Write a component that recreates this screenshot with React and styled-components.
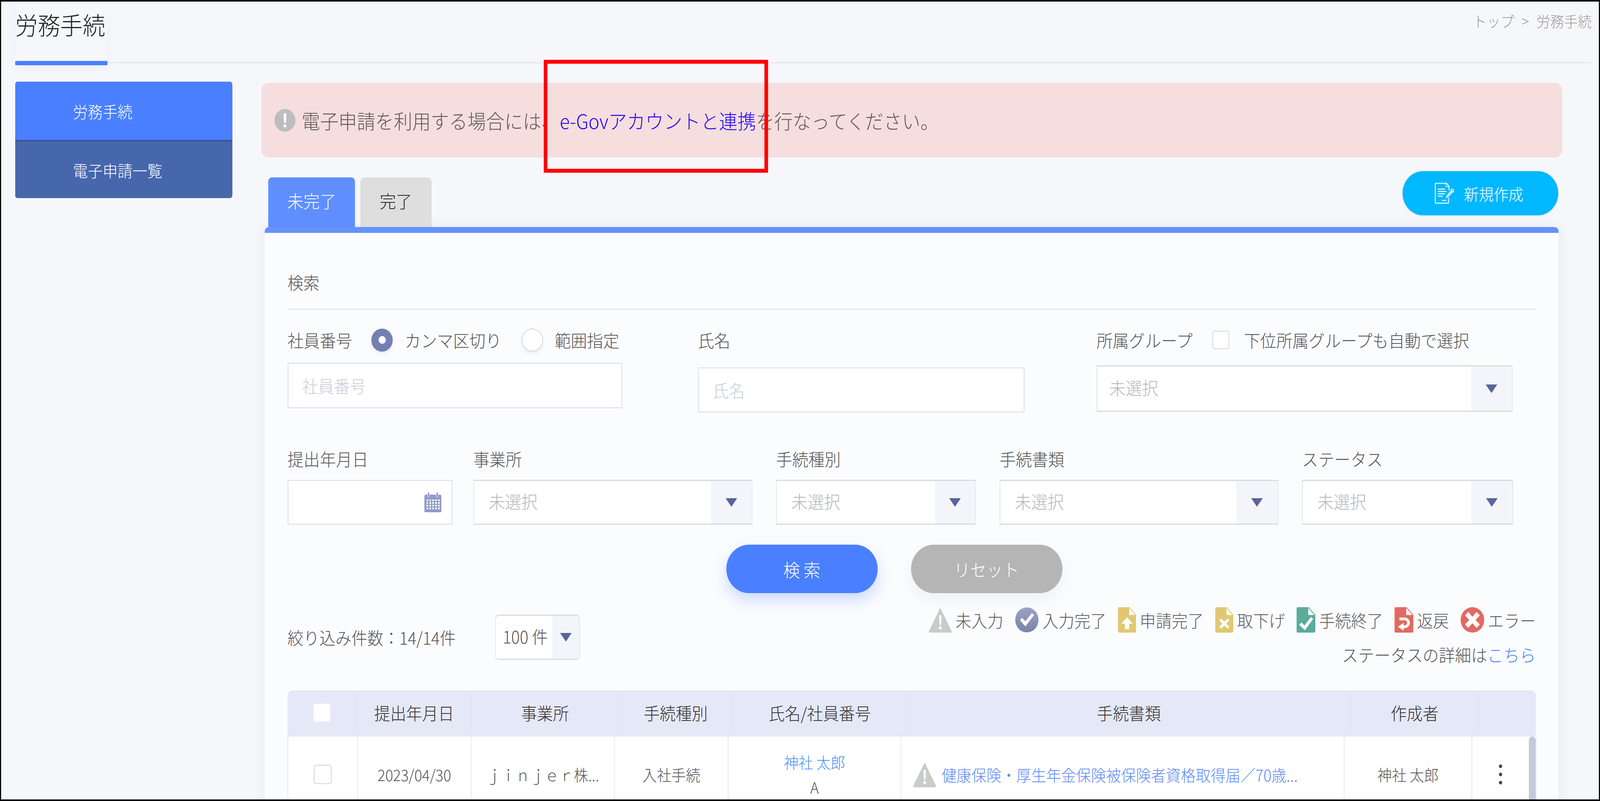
import React, { useState } from "react";
import styled, { createGlobalStyle } from "styled-components";

/* The layout is authored for a 4408px wide window. The sandbox browser reports
   innerWidth 4096, so the page is fitted to whatever width the window really has;
   at a true 4408px window the factor is exactly 1. */
const DESIGN_WIDTH = 4408;

const Global = createGlobalStyle`
  html, body { margin: 0; padding: 0; background: #f6f7fb; overflow: hidden; }
  * { box-sizing: border-box; }
  body { font-family: "Noto Sans CJK JP", "Noto Sans", sans-serif; font-weight: 300; }
`;

const Frame = styled.div`
  position: relative;
  width: ${DESIGN_WIDTH}px;
  height: 2050px;
  overflow: hidden;
  background: #f6f7fb;
  border: solid #000;
  border-width: 4px 3px;
  color: #555;
  transform-origin: 0 0;
`;

const Header = styled.header`
  height: 158px;
  margin: 0 22px 0 39px;
  display: flex;
  justify-content: space-between;
  align-items: flex-start;
  border-bottom: 3px solid #e3e6f3;
`;

const Title = styled.h1`
  width: 254px;
  height: 163px;
  margin: 0;
  padding-top: 18px;
  border-bottom: 11px solid #4a80ff;
  box-shadow: 0 14px 22px rgba(74, 128, 255, 0.05);
  font-size: 62px;
  line-height: 80px;
  font-weight: 300;
  color: #222;
  white-space: nowrap;
`;

const Crumb = styled.div`
  padding-top: 22px;
  margin-right: -2px;
  font-size: 38px;
  line-height: 54px;
  word-spacing: 12px;
  color: #a09c9c;
`;

const Body = styled.div`
  display: flex;
  align-items: flex-start;
  padding-left: 39px;
`;

const Side = styled.nav`
  width: 598px;
  margin-top: 47px;
  border-radius: 7px;
  overflow: hidden;
  background: #4767ad;
`;

const SideItem = styled.div`
  height: 149px;
  display: flex;
  align-items: center;
  padding-left: 159px;
  font-size: 41px;
  color: #fff;
  background: ${(p) => (p.$active ? "#4a80ff" : "#4767ad")};
  border-top: ${(p) => (p.$active ? "0" : "4px solid #3b5792")};
`;

const Main = styled.main`
  width: 3584px;
  margin: 50px 0 0 80px;
`;

const Alert = styled.div`
  height: 191px;
  display: flex;
  align-items: center;
  gap: 17px;
  padding-left: 36px;
  background: #f5dedd;
  border-radius: 20px;
  font-size: 50.8px;
  color: #5f5a5a;
  white-space: nowrap;
`;

const AlertLink = styled.a`
  color: #2200ff;
`;

const TabRow = styled.div`
  position: relative;
  z-index: 1;
  height: 143px;
  margin-top: 35px;
  padding: 0 11px 0 19px;
  display: flex;
  justify-content: space-between;
  align-items: flex-end;
`;

const Tabs = styled.div`
  display: flex;
  gap: 15px;
`;

const Tab = styled.div`
  width: ${(p) => p.$w}px;
  height: 127px;
  padding-bottom: 8px;
  display: flex;
  align-items: center;
  justify-content: center;
  border-radius: 10px 10px 0 0;
  font-size: 45px;
  background: ${(p) => (p.$active ? "#5f8fff" : "#dedede")};
  color: ${(p) => (p.$active ? "#fff" : "#222")};
`;

const NewButton = styled.button`
  align-self: flex-start;
  width: 429px;
  height: 113px;
  display: flex;
  align-items: center;
  gap: 26px;
  padding: 0 0 0 89px;
  border: 0;
  border-radius: 57px;
  background: #00b8ff;
  color: #fff;
  font: inherit;
  font-size: 41px;
  box-shadow: 0 1px 4px rgba(120, 110, 100, 0.25);
`;

const Panel = styled.section`
  height: 1500px;
  margin: 0 10px 0 9px;
  padding: 0 63px;
  background: #fbfcfe;
  border-top: 15px solid #6593fb;
  border-radius: 12px 12px 0 0;
  box-shadow: 0 0 30px rgba(80, 90, 160, 0.09);
`;

const SearchHead = styled.div`
  height: 197px;
  padding-top: 96px;
  border-bottom: 3px solid #e4e7f4;
  font-size: 44px;
  line-height: 60px;
  color: #555;
`;

const FormRow = styled.div`
  display: flex;
  align-items: flex-start;
  margin-top: ${(p) => p.$top}px;
`;

const Field = styled.div`
  width: ${(p) => p.$w}px;
  margin-left: ${(p) => p.$ml || 0}px;
`;

const LabelRow = styled.div`
  height: 60px;
  display: flex;
  align-items: center;
  font-size: 44.5px;
  line-height: 60px;
  color: #555;
  white-space: nowrap;
`;

const Radio = styled.span`
  width: 59px;
  height: 59px;
  margin: 0 ${(p) => p.$mr}px 0 ${(p) => p.$ml}px;
  border-radius: 50%;
  flex: none;
  background: ${(p) => (p.$on ? "#7480b2" : "#fff")};
  border: ${(p) => (p.$on ? "0" : "2px solid #d6d6d6")};
  box-shadow: 0 6px 10px rgba(120, 120, 120, 0.1);
  display: flex;
  align-items: center;
  justify-content: center;
  &::after {
    content: "";
    width: 20px;
    height: 20px;
    border-radius: 50%;
    background: ${(p) => (p.$on ? "#fff" : "transparent")};
  }
`;

const Check = styled.span`
  display: block;
  flex: none;
  width: ${(p) => p.$s || 50}px;
  height: ${(p) => p.$s || 50}px;
  margin: ${(p) => p.$m || 0};
  background: #fff;
  border: 3px solid ${(p) => p.$c || "#e0e0e0"};
  border-radius: 7px;
`;

const TextInput = styled.input`
  display: block;
  width: 100%;
  height: ${(p) => p.$h}px;
  margin-top: ${(p) => p.$top}px;
  padding: 0 0 0 ${(p) => p.$pl}px;
  background: #fff;
  border: 3px solid #e2e5ef;
  border-radius: 0;
  outline: 0;
  font: inherit;
  font-size: 44px;
  &::placeholder { color: #c8ccd6; opacity: 1; }
`;

const DateBox = styled.div`
  height: 115px;
  margin-top: 24px;
  padding-right: 28px;
  display: flex;
  align-items: center;
  justify-content: flex-end;
  background: #fff;
  border: 3px solid #e2e5ef;
`;

const Select = styled.div`
  height: ${(p) => p.$h || 115}px;
  margin-top: ${(p) => p.$top ?? 24}px;
  display: flex;
  background: #fff;
  border: solid;
  border-width: 3px 2px;
  border-color: #dcdcdc #e2e4ec;
`;

const SelectValue = styled.div`
  flex: 1;
  display: flex;
  align-items: center;
  padding: 0 0 6px ${(p) => p.$pl || 40}px;
  font-size: 45px;
  color: #b7b7b7;
`;

const ArrowCell = styled.div`
  width: ${(p) => p.$w}px;
  display: flex;
  align-items: center;
  justify-content: center;
  background: #f4f5fa;
`;

const Actions = styled.div`
  display: flex;
  justify-content: center;
  gap: 92px;
  padding-right: 96px;
  margin-top: 51px;
`;

const Action = styled.button`
  width: 417px;
  height: 124px;
  border: 0;
  border-radius: 62px;
  font: inherit;
  font-size: ${(p) => (p.$primary ? 46 : 45)}px;
  color: #fff;
  background: ${(p) => (p.$primary ? "#4a80ff" : "#b5b5b5")};
  box-shadow: ${(p) =>
    p.$primary ? "0 18px 40px rgba(74,128,255,.28)" : "0 18px 40px rgba(120,120,120,.08)"};
`;

const Results = styled.div`
  height: 213px;
  margin-top: 36px;
  display: flex;
  justify-content: space-between;
  align-items: flex-start;
`;

const CountWrap = styled.div`
  display: flex;
  align-items: center;
  margin-top: 19px;
`;

const Count = styled.div`
  width: 572px;
  font-size: 44px;
  color: #555;
  white-space: nowrap;
`;

const PageSelect = styled.div`
  width: 234px;
  height: 116px;
  display: flex;
  overflow: hidden;
  background: #fff;
  border: solid;
  border-width: 3px 2px;
  border-color: #dcdcdc #e2e4ec;
  border-radius: 10px;
`;

const PageValue = styled.div`
  flex: 1;
  display: flex;
  align-items: center;
  padding: 0 0 6px 19px;
  font-size: 44px;
  color: #555;
  white-space: pre;
`;

const LegendWrap = styled.div`
  display: flex;
  flex-direction: column;
  align-items: flex-end;
`;

const Legend = styled.div`
  display: flex;
  height: 65px;
`;

const LegendItem = styled.div`
  display: flex;
  align-items: center;
  gap: 10px;
  margin-left: 32px;
  font-size: 44px;
  color: #5b5b5b;
  white-space: nowrap;
`;

const StatusLine = styled.div`
  margin-top: 26px;
  font-size: 44.5px;
  line-height: 60px;
  color: #555;
`;

const BlueLink = styled.a`
  color: #4a80ff;
`;

const Table = styled.div`
  position: relative;
`;

const HeadRow = styled.div`
  display: grid;
  grid-template-columns: 192px 316px 405px 315px 479px 1224px 351px 157px;
  height: 118px;
  background: #e5e8f6;
  border-top: 2px solid #e6e7ee;
  border-radius: 14px 14px 0 0;
`;

const HeadCell = styled.div`
  display: flex;
  align-items: center;
  justify-content: center;
  font-size: 44px;
  color: #333;
  white-space: nowrap;
  padding-bottom: 6px;
  border-right: 2px solid #e1e4f3;
  &:last-child { border-right: 0; }
`;

const BodyRow = styled.div`
  position: relative;
  display: grid;
  grid-template-columns: 192px 313px 395px 313px 476px 1221px 352px 177px;
  height: 194px;
  background: #fff;
  border-left: 2px solid #e6e6ea;
`;

const Cell = styled.div`
  display: flex;
  flex-direction: ${(p) => (p.$col ? "column" : "row")};
  align-items: center;
  justify-content: ${(p) => p.$justify || "center"};
  padding: ${(p) => p.$pad || 0};
  font-size: 40px;
  color: #555;
  white-space: nowrap;
  border-right: 2px solid #e8e8ec;
  &:last-child { border-right: 0; }
`;

const NameLink = styled.a`
  line-height: 64px;
  color: #4a90f8;
`;

const NameCode = styled.div`
  line-height: 64px;
`;

const DocLink = styled.a`
  margin-left: 15px;
  font-size: 41.2px;
  color: #5e8bf5;
`;

const ScrollThumb = styled.div`
  position: absolute;
  top: 0;
  right: 0;
  width: 19px;
  height: 100%;
  background: #c4c9de;
  border-radius: 10px 10px 0 0;
`;

const Annotation = styled.div`
  position: absolute;
  left: 1495px;
  top: 149px;
  width: 618px;
  height: 289px;
  border: 10px solid #ff0000;
  pointer-events: none;
`;

const AlertIcon = () => (
  <svg width="58" height="58" viewBox="0 0 58 58" style={{ flex: "none" }}>
    <circle cx="29" cy="29" r="29" fill="#bdbdbd" />
    <path d="M25 11h8l-1.500 24h-5z" fill="#fff" />
    <circle cx="29" cy="43" r="4" fill="#fff" />
  </svg>
);

const NewDocIcon = () => (
  <svg width="54" height="54" viewBox="0 0 54 54" fill="none" stroke="#fff" style={{ flex: "none" }}>
    <path d="M38 38v12a2 2 0 0 1-2 2H3a2 2 0 0 1-2-2V3a2 2 0 0 1 2-2h29l7 8v10" strokeWidth="2.400" />
    <path d="M31 2v8h8" strokeWidth="1.600" />
    <path d="M8 16h20M8 22h24M8 28h20M8 34h14M20 45h12" strokeWidth="2.400" />
    <path d="M30 40l2-8 14-15 6 5-15 15z" fill="#fff" fillOpacity=".7" stroke="none" />
    <circle cx="48" cy="20" r="4" strokeWidth="2" />
  </svg>
);

const CalendarIcon = () => (
  <svg width="47" height="51" viewBox="0 0 47 51">
    <rect x="0" y="6" width="47" height="45" rx="4" fill="#8f9ac8" />
    <rect x="9" y="0" width="5" height="12" rx="2" fill="#8f9ac8" stroke="#fff" strokeWidth="1" />
    <rect x="33" y="0" width="5" height="12" rx="2" fill="#8f9ac8" stroke="#fff" strokeWidth="1" />
    <g fill="#fff">
      {[18, 25, 32, 39].map((y) =>
        [6, 14, 22, 30, 38].map((x) => <rect key={`${x}-${y}`} x={x} y={y} width="4.500" height="4.500" />)
      )}
    </g>
  </svg>
);

const Arrow = () => (
  <svg width="32" height="22" viewBox="0 0 32 22">
    <path d="M0 0h32L16 22z" fill="#5a6599" />
  </svg>
);

const WarnIcon = () => (
  <svg width="63" height="65" viewBox="0 0 63 65" style={{ flex: "none" }}>
    <path d="M31.500 2L61.500 60a3 3 0 0 1-2.700 5H4.200a3 3 0 0 1-2.700-5z" fill="#c9cccb" stroke="#c9cccb" strokeWidth="1" strokeLinejoin="round" />
    <path d="M28 21h7l-1.500 25h-4z" fill="#fff" />
    <circle cx="31.500" cy="53" r="4" fill="#fff" />
  </svg>
);

const CheckCircleIcon = () => (
  <svg width="66" height="65" viewBox="0 0 66 65" style={{ flex: "none" }}>
    <defs>
      <linearGradient id="cg" x1="0" y1="0" x2="0" y2="1">
        <stop offset="0" stopColor="#9ca3c2" />
        <stop offset="1" stopColor="#7a83aa" />
      </linearGradient>
    </defs>
    <circle cx="33" cy="32.500" r="32" fill="url(#cg)" />
    <path d="M14 33l6-6 9 9 18-21 6 5-24 29z" fill="#fff" />
  </svg>
);

const DocShape = ({ color, children, w = 50 }) => (
  <svg width={w} height="65" viewBox="0 0 50 65" style={{ flex: "none" }} preserveAspectRatio="none">
    <path d="M4 0h28l18 20v41a4 4 0 0 1-4 4H4a4 4 0 0 1-4-4V4a4 4 0 0 1 4-4z" fill={color} />
    <path d="M31 2l16 18H31z" fill="#fff" />
    {children}
  </svg>
);

const ErrorIcon = () => (
  <svg width="65" height="65" viewBox="0 0 65 65" style={{ flex: "none" }}>
    <circle cx="32.500" cy="32.500" r="32.500" fill="#e16a62" />
    <path d="M21 12l11.500 12.500L44 12l9 9-12 11.500L53 44l-9 9-11.500-12L21 53l-9-9 12-11.500L12 21z" fill="#fff" />
  </svg>
);

const App = () => {
  const [fit] = useState(() => Math.min(1, window.innerWidth / DESIGN_WIDTH));
  return (
    <>
      <Global />
      <Frame style={{ transform: `scaleX(${fit})` }}>
        <Header>
          <Title>労務手続</Title>
          <Crumb>トップ &gt; 労務手続</Crumb>
        </Header>
        <Body>
          <Side>
            <SideItem $active>労務手続</SideItem>
            <SideItem>電子申請一覧</SideItem>
          </Side>
          <Main>
            <Alert>
              <AlertIcon />
              <span>
                電子申請を利用する場合には、
                <AlertLink>e-Govアカウントと連携</AlertLink>
                を行なってください。
              </span>
            </Alert>
            <TabRow>
              <Tabs>
                <Tab $active $w={239}>未完了</Tab>
                <Tab $w={196}>完了</Tab>
              </Tabs>
              <NewButton>
                <NewDocIcon />
                新規作成
              </NewButton>
            </TabRow>
            <Panel>
              <SearchHead>検索</SearchHead>
              <FormRow $top={47}>
                <Field $w={923}>
                  <LabelRow>
                    社員番号
                    <Radio $on $ml={53} $mr={33} />
                    カンマ区切り
                    <Radio $ml={55} $mr={32} />
                    範囲指定
                  </LabelRow>
                  <TextInput $h={117} $top={28} $pl={37} placeholder="社員番号" />
                </Field>
                <Field $w={900} $ml={208}>
                  <LabelRow>氏名</LabelRow>
                  <TextInput $h={116} $top={40} $pl={38} placeholder="氏名" />
                </Field>
                <Field $w={1146} $ml={198}>
                  <LabelRow>
                    所属グループ
                    <Check $s={48} $m="0 40px 0 54px" />
                    下位所属グループも自動で選択
                  </LabelRow>
                  <Select $h={119} $top={35}>
                    <SelectValue $pl={33}>未選択</SelectValue>
                    <ArrowCell $w={112}><Arrow /></ArrowCell>
                  </Select>
                </Field>
              </FormRow>
              <FormRow $top={88}>
                <Field $w={455}>
                  <LabelRow>提出年月日</LabelRow>
                  <DateBox><CalendarIcon /></DateBox>
                </Field>
                <Field $w={769} $ml={57}>
                  <LabelRow>事業所</LabelRow>
                  <Select>
                    <SelectValue>未選択</SelectValue>
                    <ArrowCell $w={112}><Arrow /></ArrowCell>
                  </Select>
                </Field>
                <Field $w={550} $ml={65}>
                  <LabelRow>手続種別</LabelRow>
                  <Select>
                    <SelectValue>未選択</SelectValue>
                    <ArrowCell $w={110}><Arrow /></ArrowCell>
                  </Select>
                </Field>
                <Field $w={768} $ml={66}>
                  <LabelRow>手続書類</LabelRow>
                  <Select>
                    <SelectValue>未選択</SelectValue>
                    <ArrowCell $w={114}><Arrow /></ArrowCell>
                  </Select>
                </Field>
                <Field $w={582} $ml={65}>
                  <LabelRow>ステータス</LabelRow>
                  <Select>
                    <SelectValue>未選択</SelectValue>
                    <ArrowCell $w={114}><Arrow /></ArrowCell>
                  </Select>
                </Field>
              </FormRow>
              <Actions>
                <Action $primary>検 索</Action>
                <Action>リセット</Action>
              </Actions>
              <Results>
                <CountWrap>
                  <Count>絞り込み件数：14/14件</Count>
                  <PageSelect>
                    <PageValue>100 件</PageValue>
                    <ArrowCell $w={74}><Arrow /></ArrowCell>
                  </PageSelect>
                </CountWrap>
                <LegendWrap>
                  <Legend>
                    <LegendItem><WarnIcon />未入力</LegendItem>
                    <LegendItem><CheckCircleIcon />入力完了</LegendItem>
                    <LegendItem>
                      <DocShape color="#e0c873">
                        <path d="M25 26l16 16H31v14H19V42H9z" fill="#fff" />
                      </DocShape>
                      申請完了
                    </LegendItem>
                    <LegendItem>
                      <DocShape color="#e0c873">
                        <path d="M16 29l9 8 9-8 5 5-9 8 9 8-5 5-9-8-9 8-5-5 9-8-9-8z" fill="#fff" />
                      </DocShape>
                      取下げ
                    </LegendItem>
                    <LegendItem>
                      <DocShape color="#5aac9b" w={52}>
                        <path d="M7 45l6-6 8 8 17-22 6 5-22 29z" fill="#fff" />
                      </DocShape>
                      手続終了
                    </LegendItem>
                    <LegendItem>
                      <DocShape color="#e16a62" w={52}>
                        <path d="M13 30h14a10 10 0 0 1 0 20H21" fill="none" stroke="#fff" strokeWidth="7" />
                        <path d="M24 40L9 50l15 10z" fill="#fff" />
                      </DocShape>
                      返戻
                    </LegendItem>
                    <LegendItem><ErrorIcon />エラー</LegendItem>
                  </Legend>
                  <StatusLine>ステータスの詳細は<BlueLink>こちら</BlueLink></StatusLine>
                </LegendWrap>
              </Results>
              <Table>
                <HeadRow>
                  <HeadCell><Check $s={50} $c="#eceef7" /></HeadCell>
                  <HeadCell>提出年月日</HeadCell>
                  <HeadCell>事業所</HeadCell>
                  <HeadCell>手続種別</HeadCell>
                  <HeadCell>氏名/社員番号</HeadCell>
                  <HeadCell>手続書類</HeadCell>
                  <HeadCell>作成者</HeadCell>
                  <HeadCell />
                </HeadRow>
                <BodyRow>
                  <Cell><Check $s={50} /></Cell>
                  <Cell>2023/04/30</Cell>
                  <Cell>ｊｉｎｊｅｒ株...</Cell>
                  <Cell>入社手続</Cell>
                  <Cell $col>
                    <NameLink>神社 太郎</NameLink>
                    <NameCode>A</NameCode>
                  </Cell>
                  <Cell $justify="flex-start" $pad="0 0 0 33px">
                    <WarnIcon />
                    <DocLink>健康保険・厚生年金保険被保険者資格取得届／70歳...</DocLink>
                  </Cell>
                  <Cell>神社 太郎</Cell>
                  <Cell $pad="0 19px 0 0">
                    <svg width="10" height="52" viewBox="0 0 10 52">
                      <g fill="#444">
                        <circle cx="5" cy="5" r="4.500" />
                        <circle cx="5" cy="26" r="4.500" />
                        <circle cx="5" cy="47" r="4.500" />
                      </g>
                    </svg>
                  </Cell>
                  <ScrollThumb />
                </BodyRow>
              </Table>
            </Panel>
          </Main>
        </Body>
        <Annotation />
      </Frame>
    </>
  );
};

export default App;
